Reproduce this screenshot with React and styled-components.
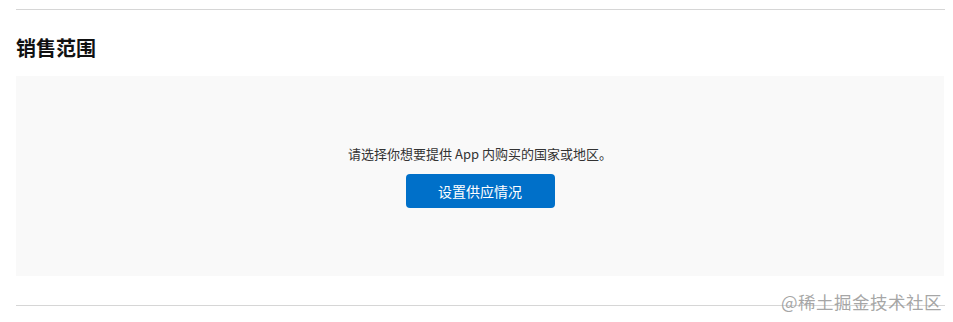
import styled, { createGlobalStyle } from "styled-components"

const GlobalStyle = createGlobalStyle`
  body {
    margin: 0;
    background: #fff;
    font-family: "Noto Sans CJK SC", "Noto Sans", sans-serif;
    color: #333;
  }
`

const Page = styled.div`
  position: relative;
  width: 953px;
  height: 322px;
  padding: 9px 8px 0 16px;
  box-sizing: border-box;
`

const Section = styled.section`
  border-top: 1px solid #d6d6d6;
  border-bottom: 1px solid #d6d6d6;
  padding-bottom: 29px;
`

const Title = styled.h2`
  margin: 25px 0 16px;
  font-size: 20px;
  line-height: 25px;
  font-weight: 700;
  color: #111;
`

const EmptyBox = styled.div`
  height: 200px;
  margin-right: 1px;
  background: #f9f9f9;
  display: flex;
  flex-direction: column;
  align-items: center;
  justify-content: center;
  gap: 11px;
`

const Hint = styled.p`
  margin: 0;
  font-size: 13px;
  line-height: 18px;
  color: #333;
`

const SetupButton = styled.button`
  width: 149px;
  height: 34px;
  border: none;
  border-radius: 4px;
  background: #0070c9;
  color: #fff;
  font-family: inherit;
  font-size: 14px;
  cursor: pointer;
`

const Watermark = styled.span`
  position: absolute;
  right: 11px;
  bottom: 9px;
  font-size: 17.5px;
  line-height: 22px;
  color: rgba(150, 150, 150, 0.85);
  letter-spacing: 0.5px;
`

const App = () => {
  return (
    <>
      <GlobalStyle />
      <Page>
        <Section>
          <Title>销售范围</Title>
          <EmptyBox>
            <Hint>请选择你想要提供 App 内购买的国家或地区。</Hint>
            <SetupButton>设置供应情况</SetupButton>
          </EmptyBox>
        </Section>
        <Watermark>@稀土掘金技术社区</Watermark>
      </Page>
    </>
  )
}

export default App
